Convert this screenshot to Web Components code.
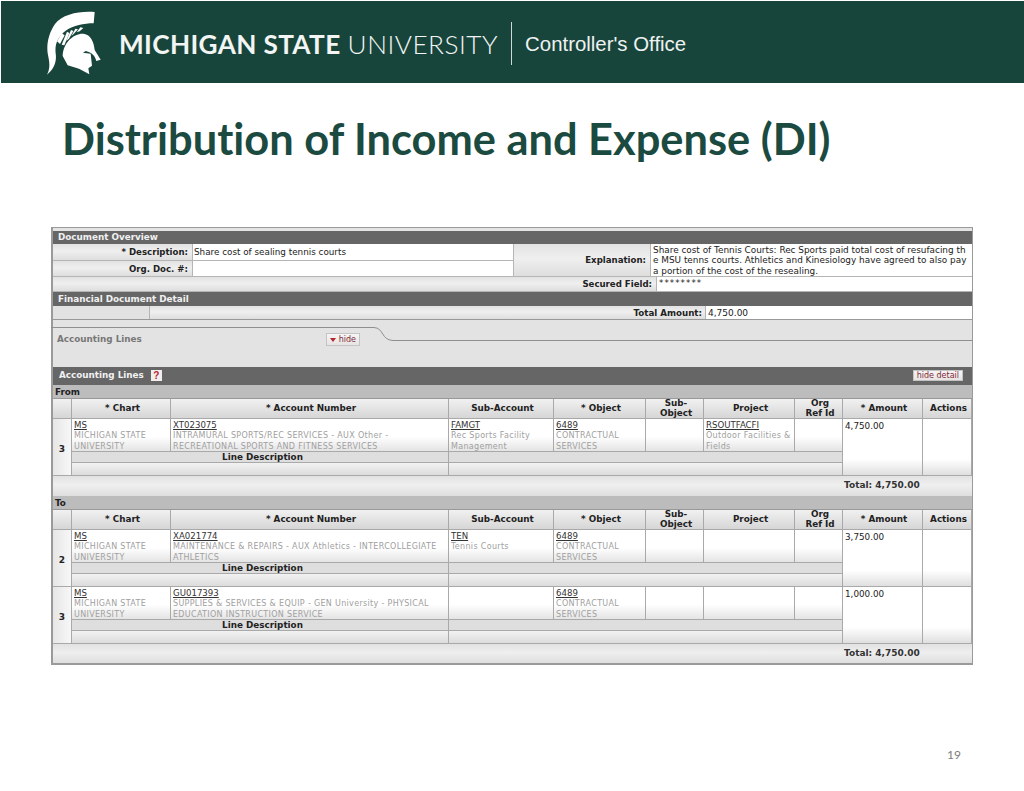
<!DOCTYPE html>
<html lang="en">
<head>
<meta charset="utf-8">
<title>Distribution of Income and Expense (DI)</title>
<style>
  html, body { margin: 0; background: #fff; }
  body { width: 1024px; height: 791px; overflow: hidden; }
</style>
</head>
<body>
<msu-banner unit="Controller's Office"></msu-banner>
<slide-title>Distribution of Income and Expense (DI)</slide-title>
<doc-frame>
  <section-bar>Document Overview</section-bar>
  <overview-panel></overview-panel>
  <section-bar style="height:14px">Financial Document Detail</section-bar>
  <total-row amount="4,750.00"></total-row>
  <tab-row label="Accounting Lines"></tab-row>
  <section-bar tall help>Accounting Lines<small-button slot="action">hide detail</small-button></section-bar>
  <group-title>From</group-title>
  <line-table id="fromLines" total="4,750.00" total-height="20"></line-table>
  <group-title>To</group-title>
  <line-table id="toLines" total="4,750.00" total-height="19"></line-table>
</doc-frame>
<page-number>19</page-number>

<script>
const cellGradient = "linear-gradient(#fff 0, #fff 55%, #e4e4e4 100%)";
const greyGradient = "linear-gradient(#e2e2e2, #efefef 45%, #dedede)";

class MsuBanner extends HTMLElement {
  constructor() {
    super();
    this.attachShadow({ mode: "open" });
    this.shadowRoot.innerHTML = `
      <style>
        :host { display: flex; align-items: center; height: 82px; margin: 1px 0 0 1px; background: #18453b; color: #fff; font-family: Lato, sans-serif; box-sizing: border-box; padding-left: 46px; }
        svg { width: 54px; height: 64px; flex: none; margin-top: 1px; }
        .name { margin-left: 18px; font-size: 26.2px; white-space: nowrap; letter-spacing: .35px; color: #f2f5f4; margin-top: 4px; }
        .name b { font-weight: 700; }
        .name span { font-weight: 300; letter-spacing: .5px; }
        i { width: 1px; height: 43px; background: #cfd8d5; margin: 2px 13px 0 13px; }
        .unit { font: 20.4px "Liberation Sans", sans-serif; color: #eef2f1; margin-top: 5px; }
      </style>
      <svg viewBox="50 33 162 192" fill="#fff">
        <path d="M193 36C150 32 96 42 74 72 56 98 48 130 52 160 56 182 62 200 50 224 70 208 80 186 76 160 73 132 82 110 106 92 130 76 160 70 190 70Z"/>
        <path d="M80 124 94 100 103 106 89 132ZM94 134 110 95 117 99 102 136ZM108 122 122 90 129 93 116 116ZM123 108 135 86 143 88 130 102ZM139 97 150 82 159 84 148 94Z"/>
        <path d="M97 168C98 128 130 99 160 101 181 104 191 126 193 150L211 179 198 183C194 168 186 158 166 153L158 158 181 161 185 197 174 205 177 223 146 206 112 196Z"/>
      </svg>
      <div class="name"><b>MICHIGAN STATE</b> <span>UNIVERSITY</span></div>
      <i></i>
      <div class="unit">${this.getAttribute("unit")}</div>
    `;
  }
}

class SlideTitle extends HTMLElement {
  constructor() {
    super();
    this.attachShadow({ mode: "open" });
    this.shadowRoot.innerHTML = `
      <style>
        :host { display: block; height: 144px; padding: 29px 0 0 62px; box-sizing: border-box; font: 700 43.4px/52px Lato, sans-serif; font-variant-ligatures: none; color: #1b4a40; white-space: nowrap; }
      </style>
      <slot></slot>
    `;
  }
}

class DocFrame extends HTMLElement {
  constructor() {
    super();
    this.attachShadow({ mode: "open" });
    this.shadowRoot.innerHTML = `
      <style>
        :host { display: block; width: 919px; margin-left: 51px; padding-top: 3px; border: 1px solid #9a9a9a; border-width: 1px 1px 2px 2px; background: #e4e4e4; font: 9px "DejaVu Sans", Verdana, sans-serif; color: #222; }
      </style>
      <slot></slot>
    `;
  }
}

class SectionBar extends HTMLElement {
  constructor() {
    super();
    this.attachShadow({ mode: "open" });
    const help = this.hasAttribute("help")
      ? `<span class="help">?</span>` : "";
    this.shadowRoot.innerHTML = `
      <style>
        :host { display: flex; align-items: center; height: 13px; box-sizing: border-box; padding: 0 9px 1px 5px; background: #666; color: #f1f1f1; font-weight: 700; font-size: 8.8px; }
        :host([tall]) { height: 18px; padding: 0 9px 3px 6px; font-size: 8.8px; }
        .help { display: inline-block; width: 11px; height: 11px; margin: 2px 0 0 7px; background: #f2eeee; color: #b3262e; font: 700 10px/11px "Liberation Sans", sans-serif; text-align: center; }
        ::slotted([slot=action]) { margin-left: auto; margin-top: 1px; }
      </style>
      <slot></slot>${help}<slot name="action"></slot>
    `;
  }
}

class OverviewPanel extends HTMLElement {
  constructor() {
    super();
    this.attachShadow({ mode: "open" });
    this.shadowRoot.innerHTML = `
      <style>
        :host { display: grid; grid-template-columns: 140px 321px 137px 321px; grid-template-rows: 17px 16px 15px; }
        div { box-sizing: border-box; border-bottom: 1px solid #b5b5b5; border-right: 1px solid #b5b5b5; }
        .label { background: ${greyGradient}; font-weight: 700; display: flex; align-items: center; justify-content: flex-end; padding-right: 4px; font-size: 8.6px; }
        .value { background: #fff; display: flex; align-items: center; padding-left: 1px; font-size: 8.8px; white-space: nowrap; }
        .notes { background: #fff; grid-row: span 2; padding: 1px 0 0 2px; font-size: 8.9px; line-height: 10.4px; white-space: nowrap; overflow: hidden; border-right: 0; }
        .span2 { grid-row: span 2; }
        .secured { grid-column: 1 / -1; display: grid; grid-template-columns: 604px 315px; border: 0; }
        .secured div { height: 15px; }
        .secured .value { border-right: 0; padding-left: 2px; font-size: 8.6px; letter-spacing: 1.1px; padding-bottom: 3px; }
      </style>
      <div class="label">* Description:</div>
      <div class="value">Share cost of sealing tennis courts</div>
      <div class="label span2">Explanation:</div>
      <div class="notes">Share cost of Tennis Courts: Rec Sports paid total cost of resufacing th<br>e MSU tenns courts. Athletics and Kinesiology have agreed to also pay<br>a portion of the cost of the resealing.</div>
      <div class="label">Org. Doc. #:</div>
      <div class="value"></div>
      <div class="secured">
        <div class="label">Secured Field:</div>
        <div class="value">********</div>
      </div>
    `;
  }
}

class TotalRow extends HTMLElement {
  constructor() {
    super();
    this.attachShadow({ mode: "open" });
    this.shadowRoot.innerHTML = `
      <style>
        :host { display: grid; grid-template-columns: 97px 556px 266px; height: 14px; box-sizing: border-box; border-bottom: 1px solid #999; }
        div { display: flex; align-items: center; box-sizing: border-box; border-right: 1px solid #b5b5b5; }
        .blank { background: #e2e2e2; }
        .label { background: ${greyGradient}; justify-content: flex-end; padding-right: 3px; font-weight: 700; font-size: 8.7px; }
        .value { background: #fff; padding-left: 2px; font-size: 9px; border-right: 0; }
      </style>
      <div class="blank"></div>
      <div class="label">Total Amount:</div>
      <div class="value">${this.getAttribute("amount")}</div>
    `;
  }
}

class SmallButton extends HTMLElement {
  constructor() {
    super();
    this.attachShadow({ mode: "open" });
    this.shadowRoot.innerHTML = `
      <style>
        :host { display: inline-flex; align-items: center; gap: 3px; height: 11px; padding: 0 3px; box-sizing: border-box; background: linear-gradient(#f6f4f4, #e8e4e4); border: 1px solid #c4c4c4; color: #7f2a38; font-weight: 400; font-size: 8px; white-space: nowrap; }
        i { width: 0; height: 0; border: 3px solid transparent; border-top: 4px solid #b3262e; border-bottom: 0; }
      </style>
      ${this.hasAttribute("arrow") ? "<i></i>" : ""}<slot></slot>
    `;
  }
}

class TabRow extends HTMLElement {
  constructor() {
    super();
    this.attachShadow({ mode: "open" });
    this.shadowRoot.innerHTML = `
      <style>
        :host { display: block; position: relative; height: 47px; box-sizing: border-box; background: #e3e3e3; }
        .label { padding: 14px 0 0 4px; color: #777; font-weight: 700; font-size: 8.8px; display: flex; }
        small-button { margin-left: 184px; height: 13px; margin-top: -1px; }
        svg { position: absolute; left: -2px; top: 0; }
      </style>
      <svg width="922" height="30" fill="none" stroke="#8f8f8f"><path d="M0 7.5H323C333 8 330 20 342 20.5H922"/></svg>
      <div class="label">${this.getAttribute("label")}<small-button arrow>hide</small-button></div>
    `;
  }
}

class GroupTitle extends HTMLElement {
  constructor() {
    super();
    this.attachShadow({ mode: "open" });
    this.shadowRoot.innerHTML = `
      <style>
        :host { display: flex; align-items: center; height: 14px; padding-left: 2px; box-sizing: border-box; background: #bcbcbc; font-weight: 700; font-size: 8.8px; color: #222; border-bottom: 1px solid #999; }
      </style>
      <slot></slot>
    `;
  }
}

class LineTable extends HTMLElement {
  constructor() {
    super();
    this.attachShadow({ mode: "open" });
    this.lines = [];
    this.render();
  }

  set data(value) {
    this.lines = value;
    this.render();
  }

  renderCell(cell) {
    if (!cell) return `<div class="cell"></div>`;
    return `<div class="cell"><u>${cell.code}</u><br><span>${cell.name || ""}</span></div>`;
  }

  render() {
    const heads = ["* Chart", "* Account Number", "Sub-Account", "* Object", "Sub-<br>Object", "Project", "Org<br>Ref Id", "* Amount", "Actions"];
    const header = `<div class="head"></div>` + heads.map((h) => `<div class="head">${h}</div>`).join("");

    const rows = this.lines.map((line) => `
      <div class="num">${line.number}</div>
      ${[line.chart, line.account, line.subAccount, line.object, null, line.project, null].map((c) => this.renderCell(c)).join("")}
      <div class="amount">${line.amount}</div>
      <div class="amount"></div>
      <div class="desc" style="grid-column: 2 / span 2">Line Description</div>
      <div class="desc" style="grid-column: 4 / span 5"></div>
      <div class="blank" style="grid-column: 2 / span 2"></div>
      <div class="blank" style="grid-column: 4 / span 5"></div>
    `).join("");

    const rowTemplate = this.lines.map(() => "33px 11px 13px").join(" ");

    this.shadowRoot.innerHTML = `
      <style>
        :host { display: block; }
        .grid { display: grid; grid-template-columns: 19px 99px 278px 105px 92px 58px 91px 48px 80px 49px; grid-template-rows: 20px ${rowTemplate}; }
        .grid > div { box-sizing: border-box; border-right: 1px solid #a9a9a9; border-bottom: 1px solid #a9a9a9; }
        .head { display: flex; align-items: center; justify-content: center; text-align: center; padding-left: 3px; background: linear-gradient(#f1f1f1, #d6d6d6); font-weight: 700; font-size: 8.8px; line-height: 9.5px; }
        .cell { background: ${cellGradient}; padding: 1px 1px 0 2px; font-size: 8.6px; line-height: 10px; white-space: nowrap; color: #333; overflow: hidden; }
        .cell span { color: #a0a0a0; font-size: 8px; letter-spacing: .32px; }
        .cell u { text-underline-offset: 1px; }
        .num { grid-row: span 3; display: flex; align-items: center; justify-content: center; background: linear-gradient(90deg, #e6e6e6, #f7f7f7); font-weight: 700; font-size: 9px; padding-top: 4px; }
        .amount { grid-row: span 3; background: linear-gradient(#fff 0, #fff 72%, #dfdfdf 100%); padding: 2px 0 0 2px; font-size: 8.8px; }
        .desc { background: #dedede; text-align: center; font-weight: 700; font-size: 8.8px; line-height: 10px; padding-left: 5px; }
        .blank { background: linear-gradient(#f2f2f2, #dcdcdc); }
        .total { height: ${this.getAttribute("total-height") || 19}px; box-sizing: border-box; padding: 3px 0 0 791px; background: ${greyGradient}; font-weight: 700; font-size: 9px; color: #333; line-height: 13px; }
      </style>
      <div class="grid">${header}${rows}</div>
      <div class="total">Total: ${this.getAttribute("total") || ""}</div>
    `;
  }
}

class PageNumber extends HTMLElement {
  constructor() {
    super();
    this.attachShadow({ mode: "open" });
    this.shadowRoot.innerHTML = `
      <style>
        :host { display: block; margin: 82px 63px 0 0; text-align: right; font: 12px Lato, sans-serif; color: #7d7d7d; }
      </style>
      <slot></slot>
    `;
  }
}

customElements.define("msu-banner", MsuBanner);
customElements.define("slide-title", SlideTitle);
customElements.define("doc-frame", DocFrame);
customElements.define("section-bar", SectionBar);
customElements.define("overview-panel", OverviewPanel);
customElements.define("total-row", TotalRow);
customElements.define("small-button", SmallButton);
customElements.define("tab-row", TabRow);
customElements.define("group-title", GroupTitle);
customElements.define("line-table", LineTable);
customElements.define("page-number", PageNumber);

const msu = { code: "MS", name: "MICHIGAN STATE<br>UNIVERSITY" };
const contractual = { code: "6489", name: "CONTRACTUAL<br>SERVICES" };

document.getElementById("fromLines").data = [
  {
    number: 3,
    chart: msu,
    account: { code: "XT023075", name: "INTRAMURAL SPORTS/REC SERVICES - AUX Other -<br>RECREATIONAL SPORTS AND FITNESS SERVICES" },
    subAccount: { code: "FAMGT", name: "Rec Sports Facility<br>Management" },
    object: contractual,
    project: { code: "RSOUTFACFI", name: "Outdoor Facilities &amp;<br>Fields" },
    amount: "4,750.00",
  },
];

document.getElementById("toLines").data = [
  {
    number: 2,
    chart: msu,
    account: { code: "XA021774", name: "MAINTENANCE &amp; REPAIRS - AUX Athletics - INTERCOLLEGIATE<br>ATHLETICS" },
    subAccount: { code: "TEN", name: "Tennis Courts" },
    object: contractual,
    amount: "3,750.00",
  },
  {
    number: 3,
    chart: msu,
    account: { code: "GU017393", name: "SUPPLIES &amp; SERVICES &amp; EQUIP - GEN University - PHYSICAL<br>EDUCATION INSTRUCTION SERVICE" },
    object: contractual,
    amount: "1,000.00",
  },
];
</script>
</body>
</html>
